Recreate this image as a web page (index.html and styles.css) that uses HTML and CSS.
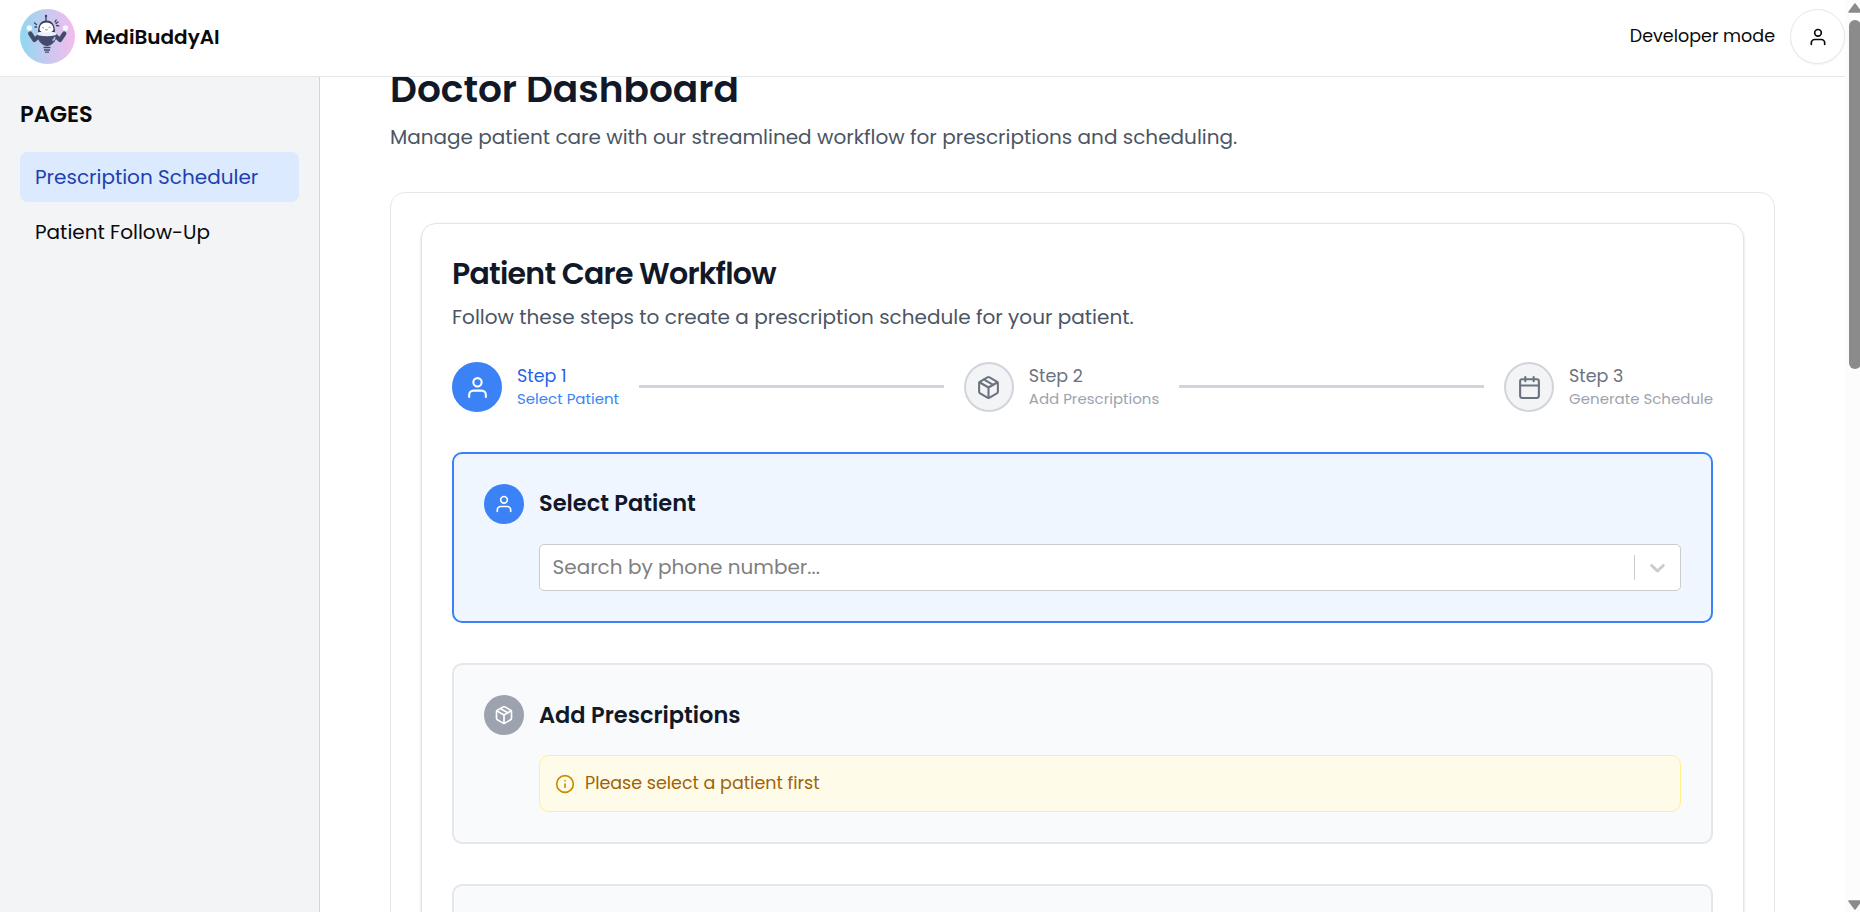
FILE: index.html
```html
<!DOCTYPE html>
<html lang="en">
<head>
<meta charset="utf-8">
<title>MediBuddyAI</title>
<link rel="stylesheet" href="styles.css">
</head>
<body>
<svg class="defs" width="0" height="0">
  <symbol id="user" viewBox="0 0 24 24"><path d="M20 21v-2a4 4 0 0 0-4-4H8a4 4 0 0 0-4 4v2"/><circle cx="12" cy="7" r="4"/></symbol>
  <symbol id="box" viewBox="0 0 24 24"><path d="M16.5 9.4l-9-5.19M21 16V8a2 2 0 0 0-1-1.73l-7-4a2 2 0 0 0-2 0l-7 4A2 2 0 0 0 3 8v8a2 2 0 0 0 1 1.73l7 4a2 2 0 0 0 2 0l7-4A2 2 0 0 0 21 16z"/><path d="M3.27 6.96 12 12.01l8.73-5.05M12 22.08V12"/></symbol>
  <symbol id="calendar" viewBox="0 0 24 24"><rect x="3" y="4" width="18" height="18" rx="2"/><path d="M16 2v4M8 2v4M3 10h18"/></symbol>
</svg>
<div class="page">
  <div class="window">
    <header class="header">
      <div class="brand">
        <svg class="logo" viewBox="0 0 55 55">
          <defs><linearGradient id="sky"><stop offset="0" stop-color="#8fd8f0"/><stop offset=".5" stop-color="#c8c9ef"/><stop offset="1" stop-color="#f3bdec"/></linearGradient></defs>
          <circle cx="27.500" cy="27.500" r="27.500" fill="url(#sky)"/>
          <g stroke="#39405f" stroke-width="1.300" stroke-linecap="round"><path d="M26 12V7.500M14.500 14l2 1.500M16.500 18h-1.500M35 13l1.200-2M36.500 16.500l2.300.3M36 14.500l2-1.500"/></g>
          <circle cx="26" cy="7" r="1.200" fill="#39405f"/>
          <path d="M10.200 24.500 14.500 31 19 27M44.300 24.500 40 31 35.500 27" stroke="#434a6b" stroke-width="4.300" stroke-linejoin="round" stroke-linecap="round" fill="none"/>
          <path d="M17.500 26h19q0 9-9.500 11.300-9.500-2.300-9.500-11.300z" fill="#434a6b"/>
          <path d="M32.500 31.500q2-1 2.500-3.500" stroke="#b9c2e6" stroke-width="1.500" fill="none"/>
          <path d="M18 23.500q0-12 8.500-12t8.500 12z" fill="#39405f"/>
          <path d="M17 24.500q1.500-1.500 3-1.500h13q2 0 3.500 1.500l-1 1.700q-8.500 2-17.500 0z" fill="#eceefb"/>
          <path d="M19.500 20q.5-6.500 7-6.500t7 6.500q0 3.500-7 3.500t-7-3.500z" fill="#fff"/>
          <path d="M22 19q1-1 2 0M28.500 18.500q1-1 2 0M25 20.500q1.500 1 3 0" stroke="#777d95" stroke-width=".8" fill="none"/>
          <g fill="#f3f7ff"><circle cx="9.300" cy="19" r="2.700"/><circle cx="45.500" cy="19" r="2.700"/></g>
          <path d="M23.500 38.500h7M24 41h6M25 43.200h4" stroke="#434a6b" stroke-width="1.300"/>
        </svg>
        <span class="brand-name">MediBuddyAI</span>
      </div>
      <div class="account">
        <span class="mode">Developer mode</span>
        <button class="avatar" aria-label="Account"><svg class="icon avatar-icon"><use href="#user"/></svg></button>
      </div>
    </header>
    <div class="body">
      <aside class="sidebar">
        <h2 class="side-title">PAGES</h2>
        <nav class="nav">
          <a class="nav-item nav-active">Prescription Scheduler</a>
          <a class="nav-item">Patient Follow-Up</a>
        </nav>
      </aside>
      <main class="main">
        <h1 class="title">Doctor Dashboard</h1>
        <p class="lead">Manage patient care with our streamlined workflow for prescriptions and scheduling.</p>
        <section class="outer">
          <div class="inner">
            <h2 class="flow-title">Patient Care Workflow</h2>
            <p class="flow-lead">Follow these steps to create a prescription schedule for your patient.</p>
            <div class="steps">
              <div class="step step-on">
                <div class="dot"><svg class="icon dot-icon"><use href="#user"/></svg></div>
                <div class="step-text"><div class="step-no">Step 1</div><div class="step-name">Select Patient</div></div>
              </div>
              <div class="line"></div>
              <div class="step">
                <div class="dot"><svg class="icon dot-icon"><use href="#box"/></svg></div>
                <div class="step-text"><div class="step-no">Step 2</div><div class="step-name">Add Prescriptions</div></div>
              </div>
              <div class="line"></div>
              <div class="step">
                <div class="dot"><svg class="icon dot-icon"><use href="#calendar"/></svg></div>
                <div class="step-text"><div class="step-no">Step 3</div><div class="step-name">Generate Schedule</div></div>
              </div>
            </div>
            <div class="card card-on">
              <div class="badge"><svg class="icon badge-icon"><use href="#user"/></svg></div>
              <div class="card-body">
                <h3 class="card-title">Select Patient</h3>
                <div class="select">
                  <span class="placeholder">Search by phone number...</span>
                  <span class="sep"></span>
                  <svg class="chevron" viewBox="0 0 20 20"><path d="M4.516 7.548c0.436-0.446 1.043-0.481 1.576 0l3.908 3.747 3.908-3.747c0.533-0.481 1.141-0.446 1.574 0 0.436 0.445 0.408 1.197 0 1.615-0.406 0.418-4.695 4.502-4.695 4.502-0.217 0.223-0.502 0.335-0.787 0.335s-0.570-0.112-0.789-0.335c0 0-4.287-4.084-4.695-4.502s-0.436-1.170 0-1.615z"/></svg>
                </div>
              </div>
            </div>
            <div class="card">
              <div class="badge"><svg class="icon badge-icon"><use href="#box"/></svg></div>
              <div class="card-body">
                <h3 class="card-title">Add Prescriptions</h3>
                <div class="notice">
                  <svg class="icon notice-icon" viewBox="0 0 24 24"><circle cx="12" cy="12" r="10"/><path d="M12 16v-4M12 8h.01"/></svg>
                  <span class="notice-text">Please select a patient first</span>
                </div>
              </div>
            </div>
            <div class="card card-next"></div>
          </div>
        </section>
      </main>
    </div>
  </div>
  <div class="scrollbar">
    <svg class="arrow" viewBox="0 0 14 10"><path d="M7 1 13 9H1z"/></svg>
    <div class="thumb"></div>
    <svg class="arrow arrow-down" viewBox="0 0 14 10"><path d="M7 9 13 1H1z"/></svg>
  </div>
</div>
</body>
</html>
```
FILE: styles.css
```css
* { box-sizing: border-box; margin: 0; padding: 0; }
body { font-family: Poppins, Inter, sans-serif; color: #0a0a0a; background: #fff; overflow: hidden; }
.defs { display: block; }
.page { display: flex; height: 912px; overflow: hidden; }
.window { display: flex; flex-direction: column; width: 1845px; }
.header { position: relative; z-index: 1; display: flex; flex: none; justify-content: space-between; height: 77px; padding: 9px 0 0 20px; background: #fff; border-bottom: 1px solid #e5e7eb; }
.brand, .account { display: flex; height: 55px; align-items: center; }
.brand { gap: 10px; }
.account { gap: 15px; }
.logo { width: 55px; height: 55px; }
.brand-name { font-size: 20px; font-weight: 600; }
.mode { padding-bottom: 2px; font-size: 17.5px; }
.avatar { display: flex; align-items: center; justify-content: center; width: 55px; height: 55px; border: 1px solid #e5e7eb; border-radius: 50%; background: #fff; box-shadow: 0 1px 2px rgba(0,0,0,.05); color: #0a0a0a; }
.icon { fill: none; stroke: currentColor; stroke-width: 2; stroke-linecap: round; stroke-linejoin: round; flex: none; }
.avatar-icon { width: 20px; height: 20px; }
.body { display: flex; flex: 1; min-height: 0; }
.sidebar { flex: none; width: 320px; padding: 19px 20px; background: #f3f4f6; border-right: 1px solid #d1d5db; }
.side-title { height: 35px; line-height: 37px; margin-bottom: 21px; font-size: 22.5px; font-weight: 600; }
.nav { display: flex; flex-direction: column; gap: 5px; }
.nav-item { height: 50px; padding-left: 15px; border-radius: 7.5px; font-size: 20px; line-height: 50px; white-space: nowrap; }
.nav-active { background: #dbeafe; color: #1e40af; }
.main { flex: 1; padding: 0 70px; min-width: 0; white-space: nowrap; }
.title { height: 46px; margin-top: -12px; line-height: 48px; font-size: 37.5px; font-weight: 600; color: #111827; }
.lead { height: 40px; line-height: 52px; margin-bottom: 41px; font-size: 20px; color: #4b5563; }
.outer { height: 900px; padding: 30px; border: 1px solid #e5e7eb; border-radius: 15px; }
.inner { height: 900px; padding: 30px; border: 1px solid #e2e4e8; border-radius: 15px; box-shadow: 0 1px 3px rgba(0,0,0,.1), 0 1px 2px rgba(0,0,0,.08); }
.flow-title { height: 38px; line-height: 40px; font-size: 30px; font-weight: 600; letter-spacing: -.025em; color: #111827; }
.flow-lead { height: 30px; margin: 10px 0 30px; line-height: 30px; font-size: 20px; color: #4b5563; }
.steps { display: flex; align-items: center; height: 50px; margin-bottom: 40px; }
.step { display: flex; align-items: center; gap: 15px; flex: none; color: #6b7280; }
.dot { display: flex; align-items: center; justify-content: center; width: 50px; height: 50px; border: 2px solid #d1d5db; border-radius: 50%; background: #f3f4f6; }
.dot-icon { width: 25px; height: 25px; }
.step-on .dot { background: #3b82f6; border-color: #3b82f6; color: #fff; }
.step-text { padding-bottom: 2px; }
.step-no { height: 25px; line-height: 25px; font-size: 17.5px; }
.step-name { height: 20px; line-height: 20px; font-size: 15px; color: #9ca3af; }
.step-on .step-no { color: #2563eb; }
.step-on .step-name { color: #3b82f6; }
.line { flex: 1; height: 3px; margin: 0 20px 1px; background: #d1d5db; }
.card { display: flex; gap: 15px; height: 181px; margin-bottom: 40px; padding: 30px; border: 2px solid #e5e7eb; border-radius: 10px; background: #f9fafb; }
.card-on { height: 171px; background: #eff6ff; border-color: #3b82f6; }
.badge { display: flex; align-items: center; justify-content: center; flex: none; width: 40px; height: 40px; border-radius: 50%; background: #9ca3af; color: #fff; }
.card-on .badge { background: #3b82f6; }
.badge-icon { width: 20px; height: 20px; }
.card-body { flex: 1; }
.card-title { height: 40px; margin-bottom: 20px; line-height: 40px; font-size: 22.5px; font-weight: 600; color: #111827; }
.card-on .card-title { line-height: 38px; }
.select { display: flex; align-items: center; height: 47px; padding: 0 10px 0 12.5px; border: 1px solid #ccc; border-radius: 5px; background: #fff; }
.placeholder { flex: 1; padding-bottom: 2px; font-size: 20px; color: #808080; }
.sep { width: 1px; height: 25px; margin-right: 10px; background: #ccc; }
.chevron { width: 25px; height: 25px; fill: #ccc; }
.notice { display: flex; align-items: center; gap: 10px; height: 57px; padding: 0 15px; border: 1px solid #fef08a; border-radius: 10px; background: #fefce8; }
.notice-icon { width: 20px; height: 20px; color: #ca8a04; }
.notice-text { padding-bottom: 2px; font-size: 17.5px; color: #a16207; }
.scrollbar { display: flex; flex-direction: column; width: 15px; height: 912px; padding: 3px 0 2px 3px; background: #fcfcfc; overflow: hidden; }
.arrow { flex: none; width: 14px; height: 10px; fill: #8b8b8b; stroke: #8b8b8b; stroke-width: 1.5; stroke-linejoin: round; }
.thumb { flex: none; width: 12px; height: 349px; margin: 7px 0 0 1px; border-radius: 6px; background: #8b8b8b; }
.arrow-down { margin-top: auto; }
```
